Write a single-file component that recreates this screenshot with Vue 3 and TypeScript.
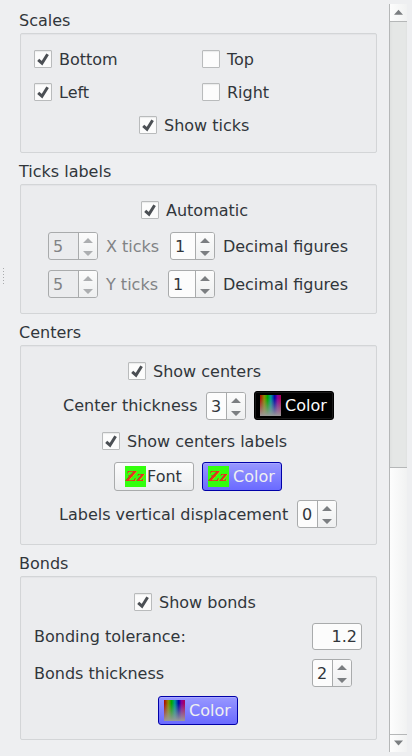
<script setup lang="ts">
import { defineComponent, h, ref } from 'vue'

const scales = ref({ bottom: true, left: true, top: false, right: false, ticks: true })
const automatic = ref(true)
const showCenters = ref(true)
const showLabels = ref(true)
const showBonds = ref(true)
const tolerance = ref('1.2')

const tickRows = [
  { axis: 'X ticks', count: 5, decimals: 1 },
  { axis: 'Y ticks', count: 5, decimals: 1 },
]

const CheckField = defineComponent({
  props: { label: { type: String, required: true }, modelValue: Boolean },
  emits: ['update:modelValue'],
  setup(props, { emit }) {
    return () =>
      h(
        'div',
        {
          class: 'check',
          role: 'checkbox',
          'aria-checked': props.modelValue,
          onClick: () => emit('update:modelValue', !props.modelValue),
        },
        [
          h('span', { class: 'check-box' }, [
            props.modelValue
              ? h('svg', { viewBox: '0 0 18 18', width: 18, height: 18 }, [
                  h('path', { class: 'check-mark', d: 'M4.2 9.8 L8 13.2 L13.6 4.2' }),
                ])
              : null,
          ]),
          h('span', props.label),
        ],
      )
  },
})

const SpinField = defineComponent({
  props: { value: { type: Number, required: true }, disabled: Boolean },
  setup(props) {
    return () =>
      h('div', { class: ['spin', { disabled: props.disabled }] }, [
        h('span', { class: 'spin-value' }, String(props.value)),
        h('span', { class: 'spin-arrows' }, [
          h('svg', { viewBox: '0 0 18 26', width: 18, height: 26 }, [
            h('path', { d: 'M4 10 H14 L9 5 Z M4 18 H14 L9 23 Z' }),
          ]),
        ]),
      ])
  },
})

const PaletteIcon = () => h('span', { class: 'icon palette' })
const FontIcon = () =>
  h('svg', { class: 'icon', viewBox: '0 0 21 21', width: 21, height: 21 }, [
    h('rect', { width: 21, height: 21, fill: '#33ff0d' }),
    h('text', { class: 'zz', x: 0.5, y: 15, textLength: 19, lengthAdjust: 'spacingAndGlyphs' }, 'Zz'),
    h('path', { d: 'M3 9.8 H8', stroke: '#e8321e', 'stroke-width': 1 }),
  ])
</script>

<template>
  <div class="window">
    <div class="splitter"><i class="grip"></i></div>
    <main class="panel">
      <section>
        <h2>Scales</h2>
        <div class="group scales">
          <div class="grid">
            <CheckField v-model="scales.bottom" label="Bottom" />
            <CheckField v-model="scales.top" label="Top" />
            <CheckField v-model="scales.left" label="Left" />
            <CheckField v-model="scales.right" label="Right" />
          </div>
          <CheckField v-model="scales.ticks" class="show-ticks" label="Show ticks" />
        </div>
      </section>

      <section>
        <h2>Ticks labels</h2>
        <div class="group ticks">
          <CheckField v-model="automatic" class="automatic" label="Automatic" />
          <div v-for="row in tickRows" :key="row.axis" class="row tick-row">
            <SpinField class="count" :value="row.count" disabled />
            <span class="axis">{{ row.axis }}</span>
            <SpinField class="decimals" :value="row.decimals" />
            <span>Decimal figures</span>
          </div>
        </div>
      </section>

      <section>
        <h2>Centers</h2>
        <div class="group centers">
          <CheckField v-model="showCenters" class="show-centers" label="Show centers" />
          <div class="row thickness">
            <span class="grow">Center thickness</span>
            <SpinField :value="3" />
            <button class="btn black"><PaletteIcon /><span>Color</span></button>
          </div>
          <CheckField v-model="showLabels" class="show-labels" label="Show centers labels" />
          <div class="row buttons">
            <button class="btn plain"><FontIcon /><span>Font</span></button>
            <button class="btn blue"><FontIcon /><span>Color</span></button>
          </div>
          <div class="row displacement">
            <span class="grow">Labels vertical displacement</span>
            <SpinField :value="0" />
          </div>
        </div>
      </section>

      <section>
        <h2>Bonds</h2>
        <div class="group bonds">
          <CheckField v-model="showBonds" class="show-bonds" label="Show bonds" />
          <div class="row tolerance">
            <span>Bonding tolerance:</span>
            <input v-model="tolerance" class="entry" />
          </div>
          <div class="row bond-thickness">
            <span>Bonds thickness</span>
            <SpinField :value="2" />
          </div>
          <div class="row bond-color">
            <button class="btn blue"><PaletteIcon /><span>Color</span></button>
          </div>
        </div>
      </section>
    </main>
    <aside class="scrollbar">
      <div class="arrow up">
        <svg viewBox="0 0 17 17" width="17" height="17"><path d="M4 10.8 H13 L8.5 5.8 Z" /></svg>
      </div>
      <div class="trough"></div>
      <div class="thumb"></div>
      <div class="arrow down">
        <svg viewBox="0 0 17 17" width="17" height="17"><path d="M4 5.6 H13 L8.5 10.6 Z" /></svg>
      </div>
    </aside>
  </div>
</template>

<style>
body {
  background: #eeeff1;
}
</style>

<style scoped>
.window {
  display: flex;
  width: 412px;
  height: 756px;
  overflow: hidden;
  box-sizing: border-box;
  background: #eeeff1;
  color: #31363b;
  font: 16px/19px 'DejaVu Sans', sans-serif;
  white-space: nowrap;
}
.window :deep(*) {
  box-sizing: border-box;
}
.splitter {
  width: 19px;
  padding: 268px 0 0 3px;
}
.grip {
  display: block;
  width: 1px;
  height: 16px;
  background: repeating-linear-gradient(#a9abad 0 1px, transparent 1px 3px);
}
.panel {
  width: 370px;
  padding-top: 2px;
}
h2 {
  margin: 0;
  padding: 9px 0 3px;
  font: inherit;
}
.group {
  display: flex;
  flex-direction: column;
  width: 357px;
  margin-left: 1px;
  border: 1px solid #d3d5d7;
  border-radius: 2px;
  background: #ebecee;
  box-shadow: inset 0 1px 1px #e3e4e6;
}
.scales { height: 120px; padding: 16px 13px; }
.ticks { height: 130px; padding: 16px 0 0 27px; }
.centers { height: 200px; padding-top: 16px; }
.bonds { height: 164px; padding: 16px 14px 0 13px; }
.grid {
  display: grid;
  grid-template-columns: 168px 1fr;
  row-gap: 14px;
  margin-bottom: 14px;
}
:deep(.check) {
  display: flex;
  gap: 7px;
  height: 19px;
}
:deep(.check-box) {
  width: 18px;
  height: 18px;
  border: 1px solid #b9bbbc;
  border-radius: 1px;
  background: #fcfcfc;
  box-shadow: inset 0 1px 1px #e9eaea;
}
:deep(.check-box svg) {
  display: block;
  margin: -1px;
}
:deep(.check-mark) {
  fill: none;
  stroke: #4b4f54;
  stroke-width: 3;
}
.show-ticks { margin-left: 105px; }
.automatic { margin: 0 0 12px 93px; }
.show-centers { margin: 0 0 10px 107px; }
.show-labels { margin: 12px 0 11px 81px; }
.show-bonds { margin: 0 0 11px 100px; }
.row {
  display: flex;
  align-items: center;
}
.grow { flex: 1; }
.tick-row {
  width: 300px;
  height: 28px;
  margin-bottom: 10px;
}
.axis {
  flex: 1;
  margin-left: 8px;
  color: #818385;
}
.decimals { margin-right: 8px; }
.tick-row:nth-child(2) .decimals { width: 45px; }
.tick-row:nth-child(3) .decimals { width: 47px; }
.count { width: 50px; }
:deep(.spin) {
  display: flex;
  width: 40px;
  height: 28px;
  border: 1px solid #a9abac;
  border-radius: 3px;
  background: #fcfcfc;
  overflow: hidden;
}
:deep(.spin.count) { width: 50px; }
:deep(.spin-value) {
  flex: 1;
  padding: 4px 0 0 4px;
}
:deep(.spin-arrows) {
  width: 19px;
  border-left: 1px solid #a9abac;
  background: linear-gradient(#fcfcfc, #eeeff0);
}
:deep(.spin-arrows svg) { display: block; }
:deep(.spin path),
.arrow path {
  fill: #7b7e81;
}
:deep(.spin.disabled) {
  background: #ebecee;
  color: #818385;
}
:deep(.spin.disabled path) { fill: #acaeb0; }
.thickness {
  width: 271px;
  height: 29px;
  margin-left: 42px;
}
.thickness .btn { margin-left: 8px; }
.buttons {
  gap: 8px;
  margin-left: 93px;
}
.displacement {
  width: 278px;
  margin: 9px 0 0 38px;
}
.btn {
  display: flex;
  align-items: flex-start;
  gap: 4px;
  width: 80px;
  height: 29px;
  padding: 3px 5px;
  border: 1px solid #a9abac;
  border-radius: 3px;
  font: inherit;
  line-height: 19px;
}
.btn span:last-child { padding-top: 1px; }
.plain {
  gap: 1px;
  padding-left: 10px;
  background: linear-gradient(#fcfcfc, #ebecee);
  color: #31363b;
}
.blue {
  border-color: #0000a8;
  background: linear-gradient(#9898ff, #6a6aff);
  box-shadow: inset 0 1px #a8a8ff;
  color: #eff0f1;
}
.black {
  border-color: #000;
  background: #000;
  box-shadow: inset 0 0 0 1px #1a1a1a;
  color: #fcfcfc;
}
:deep(.icon) {
  display: block;
  flex: none;
  width: 21px;
  height: 21px;
}
.icon.palette,
:deep(.palette) {
  background:
    linear-gradient(rgba(153, 153, 153, 0) 15%, #999),
    linear-gradient(90deg, #b00000, #8c8c00 20%, #00a800 36%, #009999 52%, #0000a8 70%, #8b0098 84%, #b00050);
}
:deep(.zz) {
  font: italic bold 15px 'Liberation Serif', serif;
  fill: #e8321e;
}
.tolerance {
  justify-content: space-between;
  height: 27px;
}
.entry {
  width: 50px;
  height: 27px;
  padding: 0 4px 1px;
  border: 1px solid #a9abac;
  border-radius: 3px;
  background: #fcfcfc;
  color: inherit;
  font: inherit;
  text-align: right;
  outline: 0;
}
.bond-thickness {
  justify-content: space-between;
  margin: 9px 10px 9px 0;
}
.bond-color { margin-left: 124px; }
.scrollbar {
  display: flex;
  flex-direction: column;
  width: 18px;
  height: 748px;
  margin-top: 4px;
  border-left: 1px solid #b5b7b8;
}
.arrow {
  height: 18px;
  background: linear-gradient(90deg, #fdfdfd, #f1f2f2);
}
.arrow svg { display: block; }
.up { border-bottom: 1px solid #b5b7b8; }
.down { border-top: 1px solid #b5b7b8; }
.trough {
  height: 445px;
  background: linear-gradient(90deg, #dfe1e0, #e5e7e6 3px 15px, #e0e2e1);
}
.thumb {
  flex: 1;
  border-top: 1px solid #b5b7b8;
  background: linear-gradient(90deg, #fdfdfd, #f1f2f2);
}
</style>
